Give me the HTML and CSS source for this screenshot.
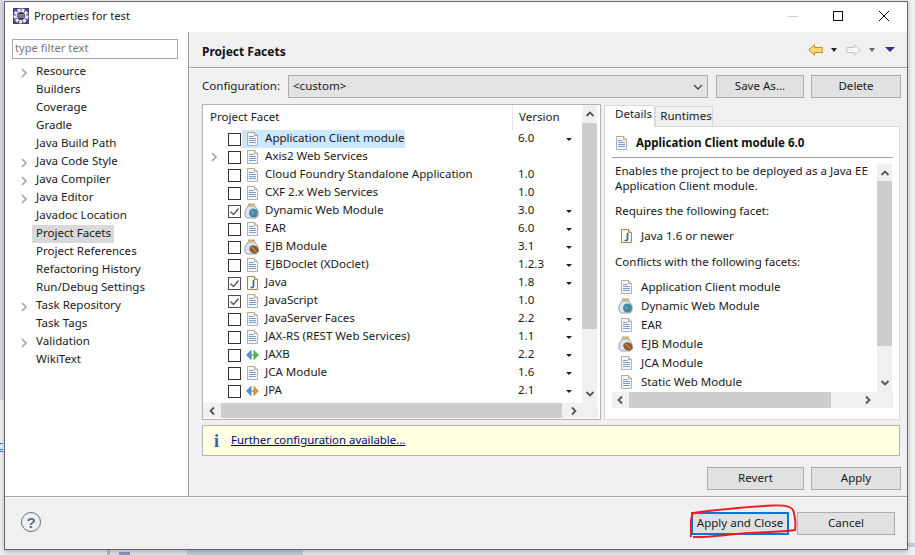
FILE: index.html
```html
<!DOCTYPE html>
<html lang="en">
<head>
<meta charset="utf-8">
<title>Properties for test</title>
<link rel="stylesheet" href="styles.css">
</head>
<body>
<svg class="defs" width="0" height="0" aria-hidden="true">
  <defs>
    <symbol id="doc" viewBox="0 0 13 14">
      <path d="M1.5 .5H8.5L11.5 3.5V13.5H1.5Z" fill="#f4f6fb" stroke="#a9b3c9"/>
      <path d="M1.5 .5H8.5L11.5 3.5" fill="none" stroke="#c2ab7c"/>
      <path d="M8.5 .5V3.5H11.5" fill="#e9e2d0" stroke="#b9a880"/>
      <path d="M3 4.5H7.5M3 6.5H10M3 8.5H10M3 10.5H10" stroke="#7f9ccb" fill="none"/>
    </symbol>
    <symbol id="java" viewBox="0 0 13 14">
      <path d="M1.5 .5H8.5L11.5 3.5V13.5H1.5Z" fill="#fbf8ef" stroke="#a98748"/>
      <path d="M8.5 .5V3.5H11.5" fill="#eadfc2" stroke="#a98748"/>
      <path d="M7.5 4V10Q7.5 11.5 6 11.5H4.5" fill="none" stroke="#2f5fa8" stroke-width="1.6"/>
    </symbol>
    <symbol id="web" viewBox="0 0 16 16">
      <path d="M4 1.500H11" stroke="#d0aa55" stroke-width="2"/>
      <path d="M4 3H11L14 8V13L12 15H3L1 13V8Z" fill="#dfe4ec" stroke="#9aa4b5"/>
      <circle cx="9.500" cy="10" r="4.500" fill="#3f83c4"/>
      <path d="M6.500 8.500Q8.500 6.500 10 8.500T9 11.500L7.500 12.500ZM11.500 10.500L13 9.500L13 12Z" fill="#6aa84f"/>
    </symbol>
    <symbol id="bean" viewBox="0 0 16 16">
      <path d="M4 1.500H11" stroke="#d0aa55" stroke-width="2"/>
      <path d="M4 3H11L14 8V13L12 15H3L1 13V8Z" fill="#dfe4ec" stroke="#9aa4b5"/>
      <ellipse cx="10" cy="10.500" rx="5" ry="4" transform="rotate(35 10 10.500)" fill="#8c5a33"/>
      <path d="M7 7.500L13 13.500" stroke="#d8b48a" stroke-width="1"/>
    </symbol>
    <symbol id="jaxb" viewBox="0 0 14 12">
      <path d="M5.500 1V11L.5 6Z" fill="#5a93cc" stroke="#3a6ea5" stroke-width=".6"/>
      <path d="M8.500 1V11L13.500 6Z" fill="#43c04a" stroke="#2e9a38" stroke-width=".6"/>
      <path d="M5.500 6H8.500" stroke="#666"/>
    </symbol>
    <symbol id="jpa" viewBox="0 0 14 12">
      <path d="M5.500 1V11L.5 6Z" fill="#5a93cc" stroke="#3a6ea5" stroke-width=".6"/>
      <path d="M8.500 1V11L13.500 6Z" fill="#dd9a3a" stroke="#b57a20" stroke-width=".6"/>
      <path d="M5.500 6H8.500" stroke="#666"/>
    </symbol>
    <symbol id="chev-r" viewBox="0 0 8 10"><path d="M2 1L6 5L2 9" fill="none" stroke="#a6a6a6" stroke-width="1.700"/></symbol>
    <symbol id="sb-left" viewBox="0 0 8 10"><path d="M6 1.500L2.500 5L6 8.500" fill="none" stroke="#555" stroke-width="1.800"/></symbol>
    <symbol id="sb-right" viewBox="0 0 8 10"><path d="M2 1.500L5.500 5L2 8.500" fill="none" stroke="#555" stroke-width="1.800"/></symbol>
    <symbol id="sb-up" viewBox="0 0 10 8"><path d="M1.500 6L5 2.500L8.500 6" fill="none" stroke="#555" stroke-width="1.800"/></symbol>
    <symbol id="sb-down" viewBox="0 0 10 8"><path d="M1.500 2L5 5.500L8.500 2" fill="none" stroke="#555" stroke-width="1.800"/></symbol>
  </defs>
</svg>

<div class="desk desk-left"></div>
<a class="desk desk-link">c</a>
<div class="desk desk-band"></div>
<div class="desk desk-tab"></div>
<div class="desk desk-pale"></div>
<div class="desk desk-stripe"></div>

<div class="window">
  <header class="titlebar">
    <svg class="app-icon" viewBox="0 0 16 16">
      <rect width="16" height="16" fill="#4b3f7a"/>
      <circle cx="8" cy="8" r="6" fill="none" stroke="#e9e9ee" stroke-width="3" stroke-dasharray="3 1"/>
      <circle cx="8" cy="8" r="5" fill="#e9e9ee"/>
      <circle cx="8" cy="8" r="4" fill="#3a3550"/>
      <path d="M4.500 7H11.500M4.500 9H11.500" stroke="#b9b9c9"/>
    </svg>
    <span class="title-text">Properties for test</span>
    <div class="win-controls">
      <svg class="win-btn win-btn-min" viewBox="0 0 10 10"><path d="M0 5.500H10" stroke="#cfcfcf"/></svg>
      <svg class="win-btn" viewBox="0 0 10 10"><rect x=".5" y=".5" width="9" height="9" fill="none" stroke="#111"/></svg>
      <svg class="win-btn" viewBox="0 0 10 10"><path d="M0 0L10 10M10 0L0 10" stroke="#111"/></svg>
    </div>
  </header>

  <div class="body">
    <aside class="sidebar">
      <div class="filter">type filter text</div>
      <ul class="tree">
        <li><svg class="chev"><use href="#chev-r"/></svg>Resource</li>
        <li>Builders</li>
        <li>Coverage</li>
        <li>Gradle</li>
        <li>Java Build Path</li>
        <li><svg class="chev"><use href="#chev-r"/></svg>Java Code Style</li>
        <li><svg class="chev"><use href="#chev-r"/></svg>Java Compiler</li>
        <li><svg class="chev"><use href="#chev-r"/></svg>Java Editor</li>
        <li>Javadoc Location</li>
        <li class="tree-sel-row">Project Facets</li>
        <li>Project References</li>
        <li>Refactoring History</li>
        <li>Run/Debug Settings</li>
        <li><svg class="chev"><use href="#chev-r"/></svg>Task Repository</li>
        <li>Task Tags</li>
        <li><svg class="chev"><use href="#chev-r"/></svg>Validation</li>
        <li>WikiText</li>
      </ul>
    </aside>

    <main class="content">
      <div class="page-head">
        <h1 class="page-title">Project Facets</h1>
        <div class="nav-icons">
          <svg class="nav-arrow" viewBox="0 0 15 12"><path d="M.8 6L6.500 .8V3.500H14.200V8.500H6.500V11.200Z" fill="#fbd976" stroke="#d08a1c"/></svg>
          <i class="tri tri-dark"></i>
          <svg class="nav-arrow nav-forward" viewBox="0 0 15 12"><path d="M14.200 6L8.500 .8V3.500H.8V8.500H8.500V11.200Z" fill="#f7f7f7" stroke="#c4c4c4"/></svg>
          <i class="tri tri-gray"></i>
          <i class="tri tri-purple"></i>
        </div>
      </div>

      <div class="page-body">
        <div class="config">
          <span class="config-label">Configuration:</span>
          <div class="combo">
            <span class="combo-value">&lt;custom&gt;</span>
            <svg class="combo-arrow" viewBox="0 0 10 8"><path d="M1 2L5 6L9 2" fill="none" stroke="#444" stroke-width="1.300"/></svg>
          </div>
          <button class="btn btn-save">Save As...</button>
          <button class="btn btn-side">Delete</button>
        </div>

        <div class="split">
          <section class="facets">
            <div class="facets-main">
              <div class="facets-list">
                <div class="facets-head"><span class="head-name">Project Facet</span><span class="head-ver">Version</span></div>
                <div class="row"><span></span><i class="check"></i><span class="label label-sel"><svg class="ico"><use href="#doc"/></svg>Application Client module</span><span class="ver">6.0</span><i class="tri tri-row"></i></div>
                <div class="row"><svg class="chev-row"><use href="#chev-r"/></svg><i class="check"></i><span class="label"><svg class="ico"><use href="#doc"/></svg>Axis2 Web Services</span><span class="ver"></span></div>
                <div class="row"><span></span><i class="check"></i><span class="label"><svg class="ico"><use href="#doc"/></svg>Cloud Foundry Standalone Application</span><span class="ver">1.0</span></div>
                <div class="row"><span></span><i class="check"></i><span class="label"><svg class="ico"><use href="#doc"/></svg>CXF 2.x Web Services</span><span class="ver">1.0</span></div>
                <div class="row"><span></span><i class="check on"><svg viewBox="0 0 13 13"><path d="M2.500 6.500L5.500 9.500L10.500 3.500" fill="none" stroke="#555" stroke-width="1.300"/></svg></i><span class="label"><svg class="ico ico-jar"><use href="#web"/></svg>Dynamic Web Module</span><span class="ver">3.0</span><i class="tri tri-row"></i></div>
                <div class="row"><span></span><i class="check"></i><span class="label"><svg class="ico"><use href="#doc"/></svg>EAR</span><span class="ver">6.0</span><i class="tri tri-row"></i></div>
                <div class="row"><span></span><i class="check"></i><span class="label"><svg class="ico ico-jar"><use href="#bean"/></svg>EJB Module</span><span class="ver">3.1</span><i class="tri tri-row"></i></div>
                <div class="row"><span></span><i class="check"></i><span class="label"><svg class="ico"><use href="#doc"/></svg>EJBDoclet (XDoclet)</span><span class="ver">1.2.3</span><i class="tri tri-row"></i></div>
                <div class="row"><span></span><i class="check on"><svg viewBox="0 0 13 13"><path d="M2.500 6.500L5.500 9.500L10.500 3.500" fill="none" stroke="#555" stroke-width="1.300"/></svg></i><span class="label"><svg class="ico"><use href="#java"/></svg>Java</span><span class="ver">1.8</span><i class="tri tri-row"></i></div>
                <div class="row"><span></span><i class="check on"><svg viewBox="0 0 13 13"><path d="M2.500 6.500L5.500 9.500L10.500 3.500" fill="none" stroke="#555" stroke-width="1.300"/></svg></i><span class="label"><svg class="ico"><use href="#doc"/></svg>JavaScript</span><span class="ver">1.0</span></div>
                <div class="row"><span></span><i class="check"></i><span class="label"><svg class="ico"><use href="#doc"/></svg>JavaServer Faces</span><span class="ver">2.2</span><i class="tri tri-row"></i></div>
                <div class="row"><span></span><i class="check"></i><span class="label"><svg class="ico"><use href="#doc"/></svg>JAX-RS (REST Web Services)</span><span class="ver">1.1</span><i class="tri tri-row"></i></div>
                <div class="row"><span></span><i class="check"></i><span class="label"><svg class="ico"><use href="#jaxb"/></svg>JAXB</span><span class="ver">2.2</span><i class="tri tri-row"></i></div>
                <div class="row"><span></span><i class="check"></i><span class="label"><svg class="ico"><use href="#doc"/></svg>JCA Module</span><span class="ver">1.6</span><i class="tri tri-row"></i></div>
                <div class="row"><span></span><i class="check"></i><span class="label"><svg class="ico"><use href="#jpa"/></svg>JPA</span><span class="ver">2.1</span><i class="tri tri-row"></i></div>
              </div>
              <div class="vscroll vscroll-facets">
                <svg class="sb-ico"><use href="#sb-up"/></svg>
                <div class="thumb-v thumb-v-facets"></div>
                <svg class="sb-ico sb-end"><use href="#sb-down"/></svg>
              </div>
            </div>
            <div class="hscroll hscroll-facets">
              <svg class="sb-ico"><use href="#sb-left"/></svg>
              <div class="thumb-h thumb-h-facets"></div>
              <svg class="sb-ico sb-end"><use href="#sb-right"/></svg>
            </div>
          </section>

          <section class="tabs">
            <div class="tab-strip">
              <span class="tab tab-active">Details</span>
              <span class="tab">Runtimes</span>
            </div>
            <div class="tab-panel">
              <div class="detail-head"><svg class="ico"><use href="#doc"/></svg><strong>Application Client module 6.0</strong></div>
              <div class="detail-frame">
                <div class="detail-top">
                  <div class="detail-text">
                    <p class="para-desc">Enables the project to be deployed as a Java EE<br>Application Client module.</p>
                    <p class="para-req">Requires the following facet:</p>
                    <div class="dep dep-java"><svg class="ico"><use href="#java"/></svg>Java 1.6 or newer</div>
                    <p class="para-con">Conflicts with the following facets:</p>
                    <div class="dep"><svg class="ico"><use href="#doc"/></svg>Application Client module</div>
                    <div class="dep"><svg class="ico ico-jar"><use href="#web"/></svg>Dynamic Web Module</div>
                    <div class="dep"><svg class="ico"><use href="#doc"/></svg>EAR</div>
                    <div class="dep"><svg class="ico ico-jar"><use href="#bean"/></svg>EJB Module</div>
                    <div class="dep"><svg class="ico"><use href="#doc"/></svg>JCA Module</div>
                    <div class="dep"><svg class="ico"><use href="#doc"/></svg>Static Web Module</div>
                  </div>
                  <div class="vscroll vscroll-detail">
                    <svg class="sb-ico"><use href="#sb-up"/></svg>
                    <div class="thumb-v thumb-v-detail"></div>
                    <svg class="sb-ico sb-end"><use href="#sb-down"/></svg>
                  </div>
                </div>
                <div class="hscroll hscroll-detail">
                  <svg class="sb-ico"><use href="#sb-left"/></svg>
                  <div class="thumb-h thumb-h-detail"></div>
                  <svg class="sb-ico sb-end"><use href="#sb-right"/></svg>
                </div>
              </div>
            </div>
          </section>
        </div>

        <div class="notice"><span class="info-i">i</span><a class="notice-link">Further configuration available...</a></div>

        <div class="page-actions">
          <button class="btn btn-revert">Revert</button>
          <button class="btn btn-side">Apply</button>
        </div>
      </div>
    </main>
  </div>

  <footer class="footer">
    <svg class="help" viewBox="0 0 20 20">
      <circle cx="10" cy="10" r="9.500" fill="none" stroke="#62728f"/>
      <text x="10" y="15.500" text-anchor="middle" class="help-q">?</text>
    </svg>
    <div class="footer-btns">
      <button class="btn btn-default">Apply and Close</button>
      <button class="btn btn-cancel">Cancel</button>
    </div>
  </footer>

  <svg class="scribble" viewBox="0 0 120 40">
    <path d="M1 33C0 24 1 14 3 9C25 6 55 3 83 1.500C93 1 101 2 103 6C105 11 106 20 105 26C90 28 75 28 60 29C40 30 15 34 3 33" fill="none" stroke="#ee1c25" stroke-width="2"/>
  </svg>
</div>
</body>
</html>
```

FILE: styles.css
```css
* { box-sizing: border-box; }
html, body { margin: 0; height: 100%; }
body {
  position: relative;
  width: 915px;
  height: 555px;
  overflow: hidden;
  background: #f1f1f4;
  font-family: "Noto Sans", "Open Sans", sans-serif;
  font-size: 11.55px;
  color: #1a1a1a;
}
.defs { position: absolute; }

/* desktop behind the dialog */
.desk { position: absolute; display: block; }
.desk-left { left: 0; top: 0; width: 4px; height: 400px; background: #d9dbe2; }
.desk-link { left: -3px; top: 436px; color: #1a73d0; text-decoration: underline; font-size: 13px; line-height: 18px; }
.desk-band { left: 907px; top: 543px; width: 8px; height: 4px; background: #c9cce0; }
.desk-tab { left: 107px; top: 549px; width: 80px; height: 6px; background: #e6e7ee; border-left: 3px solid #b9bcd6; }
.desk-pale { left: 187px; top: 549px; width: 116px; height: 6px; background: #c5d0d8; }
.desk-stripe { left: 119px; top: 552px; width: 11px; height: 3px; background: #8d9cc0; }

/* window */
.window {
  position: absolute;
  left: 4px;
  top: 1px;
  width: 904px;
  height: 549px;
  display: flex;
  flex-direction: column;
  background: #f0f0f0;
  border: 1px solid #62666b;
  box-shadow: 0 2px 5px rgba(60, 60, 70, .35);
}
.titlebar {
  flex: 0 0 30px;
  display: flex;
  align-items: center;
  background: #fff;
  padding: 0 0 2px 8px;
}
.app-icon { width: 16px; height: 16px; margin-right: 5px; }
.title-text { font-size: 11.3px; color: #222; margin-bottom: 2px; }
.win-controls { margin-left: auto; display: flex; gap: 36px; padding-right: 18px; }
.win-btn { width: 10px; height: 10px; display: block; }
.win-btn-min { margin-right: -1px; }

.body { flex: 0 0 465px; display: flex; border-bottom: 1px solid #a0a0a0; }
.sidebar {
  flex: 0 0 184px;
  background: #fff;
  border-right: 1px solid #a0a0a0;
  padding: 7px 10px 0 7px;
}
.filter {
  height: 20px;
  width: 166px;
  border: 1px solid #a9a9a9;
  color: #777;
  padding-left: 2px;
  line-height: 15px;
  font-size: 11.2px;
}
.tree { list-style: none; margin: 4px 0 0; padding: 0; }
.tree li { position: relative; height: 18px; line-height: 16px; padding-left: 24px; white-space: nowrap; }
.chev { position: absolute; left: 8px; top: 5px; width: 8px; height: 10px; }
.tree li.tree-sel-row { margin-left: 20px; padding-left: 4px; width: 82px; background: #d9d9d9; }

.content { flex: 1; display: flex; flex-direction: column; min-width: 0; }
.page-head {
  flex: 0 0 36px;
  display: flex;
  align-items: center;
  padding: 0 12px 0 13px;
  border-bottom: 1px solid #a0a0a0;
  box-shadow: 0 1px 0 #fff;
}
.page-title { margin: 3px 0 0; font-size: 12px; font-weight: 700; color: #111; }
.nav-icons { margin-left: auto; display: flex; align-items: center; }
.nav-arrow { width: 15px; height: 12px; margin-right: 8px; }
.nav-forward { margin-left: 9px; }
.tri { display: block; width: 0; height: 0; border-style: solid; border-color: transparent; border-width: 4px 3.5px 0; }
.tri-dark { border-top-color: #222; }
.tri-gray { border-top-color: #666; }
.tri-purple { border-top-color: #3e2f80; border-width: 5px 5px 0; margin-left: 10px; }
.tri-row { border-top-color: #222; border-width: 3px 3px 0; }

.page-body { flex: 1; display: flex; flex-direction: column; padding: 7px 6px 0 13px; }
.config { display: flex; align-items: center; height: 23px; }
.config-label { width: 86px; margin-bottom: 2px; }
.combo {
  width: 420px;
  height: 23px;
  display: flex;
  align-items: center;
  justify-content: space-between;
  padding: 0 4px;
  background: #e3e3e3;
  border: 1px solid #adadad;
}
.combo-value { margin-bottom: 2px; }
.combo-arrow { width: 10px; height: 8px; }
.btn {
  display: block;
  height: 23px;
  padding: 0 0 2px;
  background: #e1e1e1;
  border: 1px solid #adadad;
  font: inherit;
  color: #1a1a1a;
  text-align: center;
}
.btn-save { width: 88px; margin-left: 8px; }
.btn-side { width: 90px; margin-left: 7px; }

.split { display: flex; gap: 3px; margin-top: 6px; height: 316px; }
.facets {
  flex: 0 0 399px;
  display: flex;
  flex-direction: column;
  background: #fff;
  border: 1px solid #b4b4b4;
  padding: 0 2px 1px 0;
}
.facets-main { flex: 1; display: flex; min-height: 0; }
.facets-list { width: 379px; overflow: hidden; }
.facets-head { display: flex; height: 25px; line-height: 23px; }
.head-name { width: 309px; padding-left: 7px; }
.head-ver { flex: 1; height: 100%; border-left: 1px solid #e5e5e5; padding-left: 6px; }
.row {
  display: grid;
  grid-template-columns: 25px 14px 276px 48px auto;
  align-items: center;
  height: 18px;
  line-height: 16px;
  white-space: nowrap;
}
.chev-row { width: 8px; height: 10px; margin-left: 7px; }
.check { display: block; width: 13px; height: 13px; background: #fff; border: 1px solid #333; }
.check.on { border-color: #4d4d4d; }
.check svg { display: block; width: 13px; height: 13px; margin: -1px; }
.label {
  display: inline-flex;
  align-items: center;
  justify-self: start;
  height: 18px;
  padding: 0 1px 2px 4px;
  color: #1a1a1a;
}
.label-sel { background: #cce8ff; }
.label .ico { margin-top: 2px; }
.ico { flex: 0 0 13px; width: 13px; height: 14px; margin-right: 6px; }
.ico-jar { flex: 0 0 16px; width: 16px; height: 16px; margin-left: -2px; margin-right: 5px; }
.ver { display: block; height: 18px; }

.vscroll { display: flex; flex-direction: column; align-items: center; background: #f0f0f0; }
.vscroll-facets { width: 15px; }
.vscroll-detail { width: 15px; margin-right: 1px; }
.sb-ico { display: block; flex: none; width: 10px; height: 8px; margin-top: 5px; }
.sb-end { margin-top: auto; margin-bottom: 5px; }
.thumb-v { width: 15px; background: #cdcdcd; margin-top: 5px; }
.thumb-v-facets { height: 206px; }
.thumb-v-detail { height: 165px; margin-top: 4px; }
.hscroll { display: flex; align-items: center; background: #f0f0f0; flex: none; }
.hscroll .sb-ico { width: 8px; height: 10px; margin: 0; }
.hscroll .sb-end { margin-left: auto; }
.thumb-h { background: #cdcdcd; margin-left: 5px; }
.thumb-h-facets { width: 341px; height: 15px; }
.thumb-h-detail { width: 202px; height: 16px; }
.hscroll-facets { height: 15px; padding: 0 20px 0 5px; }
.hscroll-detail { height: 16px; padding: 0 21px 0 4px; }

.tabs { flex: 0 0 296px; display: flex; flex-direction: column; }
.tab-strip { display: flex; height: 22px; align-items: flex-end; }
.tab {
  height: 20px;
  width: 58px;
  line-height: 17px;
  padding-left: 4px;
  text-align: center;
  background: #f0f0f0;
  border: 1px solid #d9d9d9;
  border-bottom: 0;
}
.tab-active {
  width: 51px;
  height: 22px;
  line-height: 16px;
  padding-left: 8px;
  background: #fff;
  margin-bottom: -1px;
  position: relative;
  z-index: 1;
}
.tab-panel {
  flex: 1;
  background: #fff;
  border: 1px solid #d9d9d9;
  padding: 0 6px 0 7px;
  display: flex;
  flex-direction: column;
}
.detail-head {
  display: flex;
  align-items: center;
  height: 31px;
  padding: 0 0 0 3px;
  border-bottom: 1px solid #a0a0a0;
  flex: none;
}
.detail-head .ico { margin-top: 2px; }
.detail-head strong { font-weight: 700; color: #111; margin-left: 2px; }
.detail-frame { margin-top: 6px; display: flex; flex-direction: column; height: 244px; }
.detail-top { flex: 1; display: flex; min-height: 0; }
.detail-text { flex: 1; overflow: hidden; padding-left: 3px; line-height: 15px; }
.detail-text p { margin: 0; }
.detail-text .para-desc { margin-top: -1px; }
.para-req { padding-top: 10px; }
.detail-text .para-con { padding-top: 9px; margin-bottom: 8px; }
.dep { display: flex; align-items: center; height: 19px; padding-left: 5px; white-space: nowrap; }
.dep .ico { margin-right: 8px; }
.dep .ico-jar { margin-left: -2px; margin-right: 7px; }
.dep-java { margin-top: 8px; }

.notice {
  display: flex;
  align-items: center;
  height: 31px;
  margin-top: 5px;
  width: 698px;
  background: #ffffe1;
  border: 1px solid #b4b4b4;
  padding-left: 11px;
}
.info-i { width: 17px; font-family: "Liberation Serif", serif; font-weight: 700; font-size: 18px; color: #3160b0; line-height: 20px; }
.notice-link { display: block; margin-bottom: 2px; color: #000080; text-decoration: underline; font-size: 11.4px; }

.page-actions { display: flex; justify-content: flex-end; margin-top: 11px; }
.btn-revert { width: 97px; }

.footer {
  flex: 1;
  display: flex;
  align-items: flex-start;
  justify-content: space-between;
  padding: 14px 12px 0 16px;
  border-top: 1px solid #fff;
}
.help { width: 20px; height: 20px; }
.help-q { font-family: "Liberation Sans", sans-serif; font-weight: 700; font-size: 15px; fill: #5a6b8c; }
.footer-btns { display: flex; gap: 8px; }
.btn-default { width: 98px; border: 2px solid #0078d7; }
.btn-cancel { width: 98px; }
.scribble { position: absolute; left: 685px; top: 502px; width: 120px; height: 40px; pointer-events: none; }
```
